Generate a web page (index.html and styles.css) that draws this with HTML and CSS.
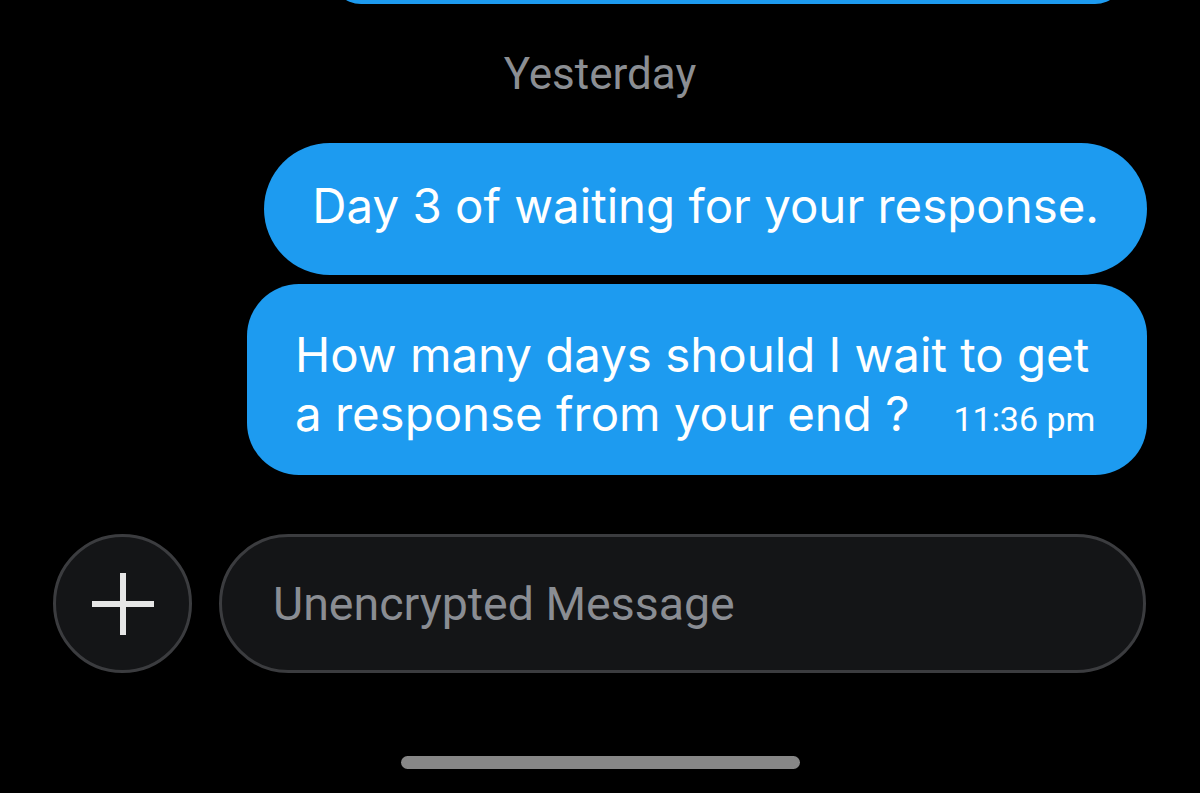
FILE: index.html
```html
<!doctype html>

<html>

<head>
    <meta charset="utf-8">
    <link rel="stylesheet" href="styles.css">
</head>

<body>

<div class="screen">
    <div class="thread">
        <div class="bubble bubble--prev"></div>
        <div class="day">Yesterday</div>
        <div class="bubble bubble--pill">Day 3 of waiting for your response.</div>
        <div class="bubble bubble--multi">How many days should I wait to get a response from your end ?<span class="time">11:36 pm</span></div>
    </div>

    <div class="composer">
        <button class="attach" type="button">
            <svg width="62" height="62" viewBox="0 0 62 62">
                <path d="M31 0 V62 M0 31 H62" stroke="#e6e6e6" stroke-width="6" fill="none"/>
            </svg>
        </button>
        <div class="field">Unencrypted Message</div>
    </div>

    <div class="home-bar"></div>
</div>

</body>

</html>
```

FILE: styles.css
```css
html,
body {
    width: 100%;
    height: 100%;
    padding: 0;
    margin: 0;
    background: #000;
}

.screen {
    height: 100%;
    overflow: hidden;
    display: flex;
    flex-direction: column;
}

.thread {
    display: flex;
    flex-direction: column;
    align-items: flex-end;
    padding: 0 53px 0 0;
}

.bubble {
    box-sizing: border-box;
    max-width: 900px;
    padding: 0 46px 0 48px;
    background: #1d9bf0;
    color: #fff;
    font-family: Inter, "Noto Sans", sans-serif;
    font-size: 47.4px;
    border-radius: 52px;
}

/* bottom of the previous message, scrolled off the top */
.bubble--prev {
    width: 794px;
    height: 60px;
    margin: -56px 22px 0 0;
}

.bubble--pill {
    height: 132px;
    margin-top: 44px;
    padding-top: 34px;
    padding-right: 48px;
    line-height: 57px;
    border-radius: 66px;
}

.bubble--multi {
    margin-top: 9px;
    padding-top: 41px;
    padding-bottom: 32px;
    line-height: 59px;
}

.time {
    margin-left: 44px;
    white-space: nowrap;
    font-family: Roboto, sans-serif;
    font-size: 34px;
    line-height: 1;
}

.day {
    align-self: center;
    margin: 45px 0 0 53px;
    color: #8b8e93;
    font-family: Roboto, sans-serif;
    font-size: 44px;
    line-height: 50px;
}

.composer {
    display: flex;
    align-items: center;
    gap: 27px;
    margin-top: 59px;
    padding: 0 54px 0 53px;
}

.attach {
    box-sizing: border-box;
    width: 139px;
    height: 139px;
    flex: none;
    padding: 0;
    display: flex;
    align-items: center;
    justify-content: center;
    background: #141517;
    border: 3px solid #3b3c3f;
    border-radius: 50%;
}

.field {
    box-sizing: border-box;
    flex: 1;
    height: 139px;
    display: flex;
    align-items: center;
    padding-left: 51px;
    background: #141517;
    border: 3px solid #3b3c3f;
    border-radius: 70px;
    color: #8a8d93;
    font-family: Roboto, sans-serif;
    font-size: 46.5px;
}

.home-bar {
    width: 399px;
    height: 13px;
    margin: 83px auto 0;
    background: #878787;
    border-radius: 7px;
}
```
